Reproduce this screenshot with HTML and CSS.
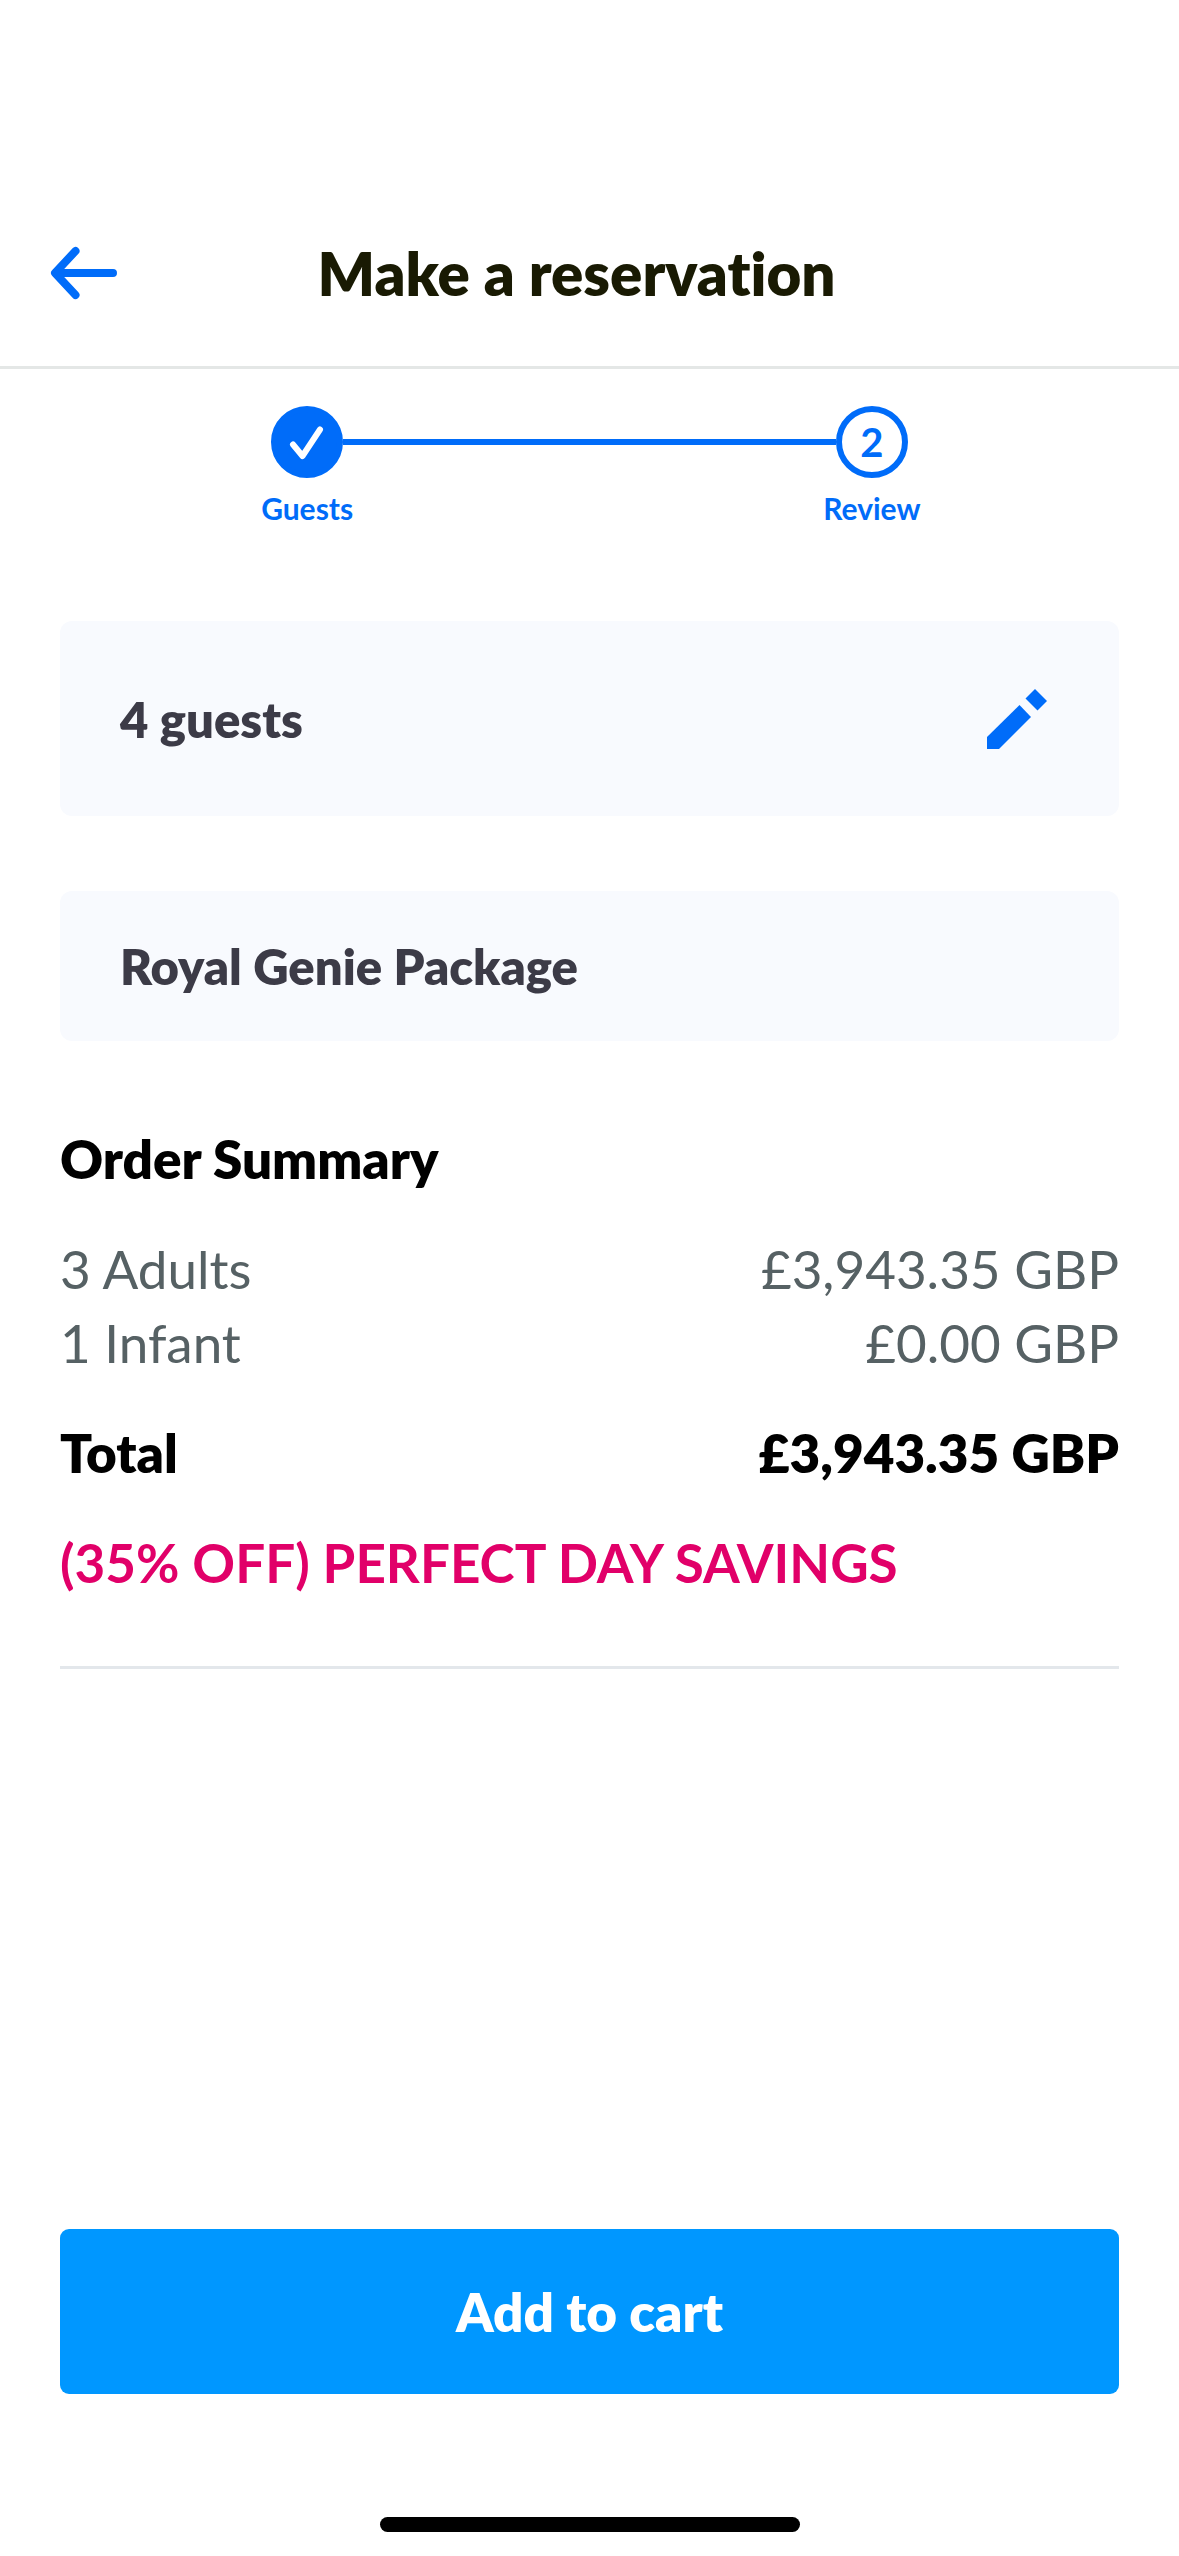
FILE: index.html
```html
<!DOCTYPE html>
<html lang="en">
<head>
  <meta charset="UTF-8" />
  <meta name="viewport" content="width=device-width, initial-scale=1.0" />
  <title>Make a reservation</title>
  <link rel="stylesheet" href="styles.css">
</head>
<body>

  <header class="top-bar">
    <button class="back-btn" aria-label="Back">
      <svg width="72" height="60" viewBox="0 0 72 60" fill="none" stroke="currentColor" stroke-width="8" stroke-linecap="round" stroke-linejoin="round">
        <path d="M65 30H8M27.5 8L7 30l20.5 22" />
      </svg>
    </button>
    <h1>Make a reservation</h1>
  </header>

  <ol class="steps">
    <li class="step">
      <span class="step-circle done">
        <svg width="72" height="72" viewBox="0 0 72 72" fill="none" stroke="currentColor" stroke-width="6" stroke-linecap="round" stroke-linejoin="round">
          <path d="M22 38.5L31.5 50L49 23.500" />
        </svg>
      </span>
      <span class="step-label">Guests</span>
    </li>
    <li class="step-line" aria-hidden="true"></li>
    <li class="step" aria-current="step">
      <span class="step-circle">2</span>
      <span class="step-label">Review</span>
    </li>
  </ol>

  <main>
    <section class="card guests-card">
      <h2>4 guests</h2>
      <button class="edit-btn" aria-label="Edit guests">
        <svg width="60" height="60" viewBox="0 0 60 60" fill="currentColor">
          <path d="M48 0L60 12L50.5 21.5L38.5 9.5z" />
          <path d="M32.5 16L44 28L12 60H0V48z" />
        </svg>
      </button>
    </section>

    <section class="card">
      <h2>Royal Genie Package</h2>
    </section>

    <section class="summary">
      <h2>Order Summary</h2>
      <table>
        <tbody>
          <tr>
            <th scope="row">3 Adults</th>
            <td>£3,943.35 GBP</td>
          </tr>
          <tr>
            <th scope="row">1 Infant</th>
            <td>£0.00 GBP</td>
          </tr>
        </tbody>
        <tfoot>
          <tr>
            <th scope="row">Total</th>
            <td>£3,943.35 GBP</td>
          </tr>
        </tfoot>
      </table>
      <p class="savings">(35% OFF) PERFECT DAY SAVINGS</p>
    </section>
  </main>

  <footer>
    <button class="btn">Add to cart</button>
    <div class="home-indicator"></div>
  </footer>

</body>
</html>
```

FILE: styles.css
```css
* {
  box-sizing: border-box;
}

body {
  font-family: Lato, "Liberation Sans", sans-serif;
  font-variant-ligatures: none;
  margin: 0;
  min-height: 100vh;
  display: flex;
  flex-direction: column;
  background: #fff;
  color: #000;
}

h1,
h2,
p {
  margin: 0;
}

h1,
h2 {
  font-weight: 800;
}

button {
  font-family: inherit;
  border: none;
  padding: 0;
  background: none;
  cursor: pointer;
}

svg {
  display: block;
}

.top-bar {
  display: grid;
  grid-template-columns: 72px 1fr 72px;
  align-items: center;
  height: 369px;
  padding: 180px 74px 0 48px;
  border-bottom: 3px solid #e4e7e6;
}

.top-bar h1 {
  font-size: 60px;
  line-height: 72px;
  text-align: center;
  color: #191a03;
}

.back-btn {
  color: #006cf9;
}

.steps {
  list-style: none;
  display: flex;
  margin: 0;
  padding: 37px 23% 95px;
  color: #006cf9;
}

.step {
  display: flex;
  flex-direction: column;
  align-items: center;
  gap: 12px;
  width: 72px;
}

.step-circle {
  display: flex;
  align-items: center;
  justify-content: center;
  width: 72px;
  height: 72px;
  border: 6px solid #006cf9;
  border-radius: 50%;
  font-size: 40px;
  font-weight: bold;
}

.step-circle.done {
  background: #006cf9;
  color: #fff;
}

.step-circle svg {
  flex-shrink: 0;
}

.step-label {
  font-size: 30px;
  line-height: 36px;
  font-weight: bold;
}

.step-line {
  flex: 1;
  height: 6px;
  margin-top: 33px;
  background: #006cf9;
}

main {
  flex: 1;
  padding: 0 60px;
}

.card {
  display: flex;
  align-items: center;
  justify-content: space-between;
  min-height: 150px;
  padding: 0 72px 0 60px;
  border-radius: 12px;
  background: #f8fafe;
}

.card h2 {
  font-size: 49px;
  line-height: 60px;
  color: #3c3b47;
}

.guests-card {
  min-height: 195px;
  margin-bottom: 75px;
}

.edit-btn {
  color: #006cf9;
}

.summary {
  margin-top: 81px;
  padding-bottom: 66px;
  border-bottom: 3px solid #e3e7eb;
  font-size: 53px;
  line-height: 74px;
}

.summary h2 {
  font-size: inherit;
}

.summary table {
  width: 100%;
  margin: 36px 0;
  border-collapse: collapse;
  color: #566164;
}

.summary th,
.summary td {
  padding: 0;
  font-weight: normal;
  text-align: left;
}

.summary td {
  text-align: right;
}

.summary tfoot th,
.summary tfoot td {
  padding-top: 36px;
  font-weight: 800;
  color: #000;
}

.savings {
  font-weight: bold;
  color: #e10069;
}

footer {
  display: flex;
  flex-direction: column;
  align-items: center;
  gap: 123px;
  padding: 60px 60px 24px;
}

.btn {
  width: 100%;
  height: 165px;
  border-radius: 9px;
  background: #0097ff;
  color: #fff;
  font-size: 53px;
  font-weight: 800;
}

.home-indicator {
  width: 420px;
  max-width: 50%;
  height: 15px;
  border-radius: 8px;
  background: #000;
}
```
